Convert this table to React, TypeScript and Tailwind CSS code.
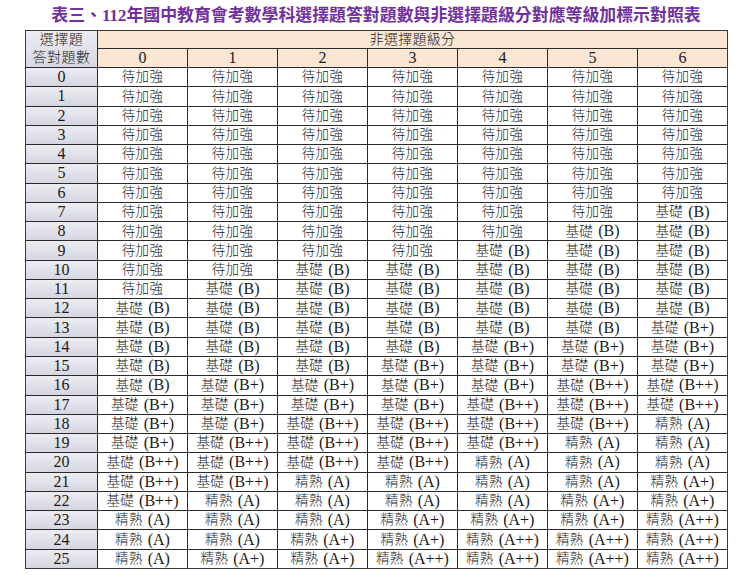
import React from "react";

type Cell = [string, string];
const W: Cell = ["待加強", ""];
const B: Cell = ["基礎", "(B)"];
const B1: Cell = ["基礎", "(B+)"];
const B2: Cell = ["基礎", "(B++)"];
const A: Cell = ["精熟", "(A)"];
const A1: Cell = ["精熟", "(A+)"];
const A2: Cell = ["精熟", "(A++)"];

const rows: Cell[][] = [
  [W, W, W, W, W, W, W],
  [W, W, W, W, W, W, W],
  [W, W, W, W, W, W, W],
  [W, W, W, W, W, W, W],
  [W, W, W, W, W, W, W],
  [W, W, W, W, W, W, W],
  [W, W, W, W, W, W, W],
  [W, W, W, W, W, W, B],
  [W, W, W, W, W, B, B],
  [W, W, W, W, B, B, B],
  [W, W, B, B, B, B, B],
  [W, B, B, B, B, B, B],
  [B, B, B, B, B, B, B],
  [B, B, B, B, B, B, B1],
  [B, B, B, B, B1, B1, B1],
  [B, B, B, B1, B1, B1, B1],
  [B, B1, B1, B1, B1, B2, B2],
  [B1, B1, B1, B1, B2, B2, B2],
  [B1, B1, B2, B2, B2, B2, A],
  [B1, B2, B2, B2, B2, A, A],
  [B2, B2, B2, B2, A, A, A],
  [B2, B2, A, A, A, A, A1],
  [B2, A, A, A, A, A1, A1],
  [A, A, A, A1, A1, A1, A2],
  [A, A, A1, A1, A2, A2, A2],
  [A, A1, A1, A2, A2, A2, A2],
];

const font = { fontFamily: '"Liberation Serif", "Noto Sans CJK TC", serif' };

export default function App() {
  return (
    <div className="w-[740px] h-[578px] bg-white text-[#1a1a1a]" style={font}>
      <div className="h-[30px] flex items-center justify-center pt-[2px] pl-[12px]">
        <span className="text-[16.9px] font-bold text-[#7030a0] leading-none">
          表三、112年國中教育會考數學科選擇題答對題數與非選擇題級分對應等級加標示對照表
        </span>
      </div>
      <div className="ml-[25px] w-[703px] bg-[#2a2a2a] border-l border-t border-b border-r-2 border-[#3a3a3a] grid grid-cols-[71px_repeat(7,89px)] grid-rows-[17px_18px_repeat(26,18.28px)] gap-px">
        <div className="row-span-2 bg-gradient-to-b from-[#ececf2] to-[#d8d8e4] flex flex-col items-center justify-center text-[14px] leading-[18px] tracking-[0.5px] font-light">
          <span>選擇題</span>
          <span>答對題數</span>
        </div>
        <div className="col-span-7 bg-[#fbe5d3] flex items-center justify-center text-[14px] leading-none tracking-[0.3px] font-light">
          非選擇題級分
        </div>
        {[0, 1, 2, 3, 4, 5, 6].map((n) => (
          <div
            key={n}
            className="bg-[#fbe5d3] flex items-center justify-center text-[16px] leading-none"
          >
            {n}
          </div>
        ))}
        {rows.map((r, i) => (
          <React.Fragment key={i}>
            <div className="bg-gradient-to-b from-[#ececf2] to-[#d6d6e2] flex items-center justify-center text-[16px] leading-none">
              {i}
            </div>
            {r.map((c, j) => (
              <div
                key={j}
                className="bg-white flex items-center justify-center leading-none whitespace-nowrap"
              >
                <span className="text-[13.5px] tracking-[0.3px] font-light">{c[0]}</span>
                {c[1] && (
                  <span className="text-[16px] ml-[5px]">{c[1]}</span>
                )}
              </div>
            ))}
          </React.Fragment>
        ))}
      </div>
    </div>
  );
}
